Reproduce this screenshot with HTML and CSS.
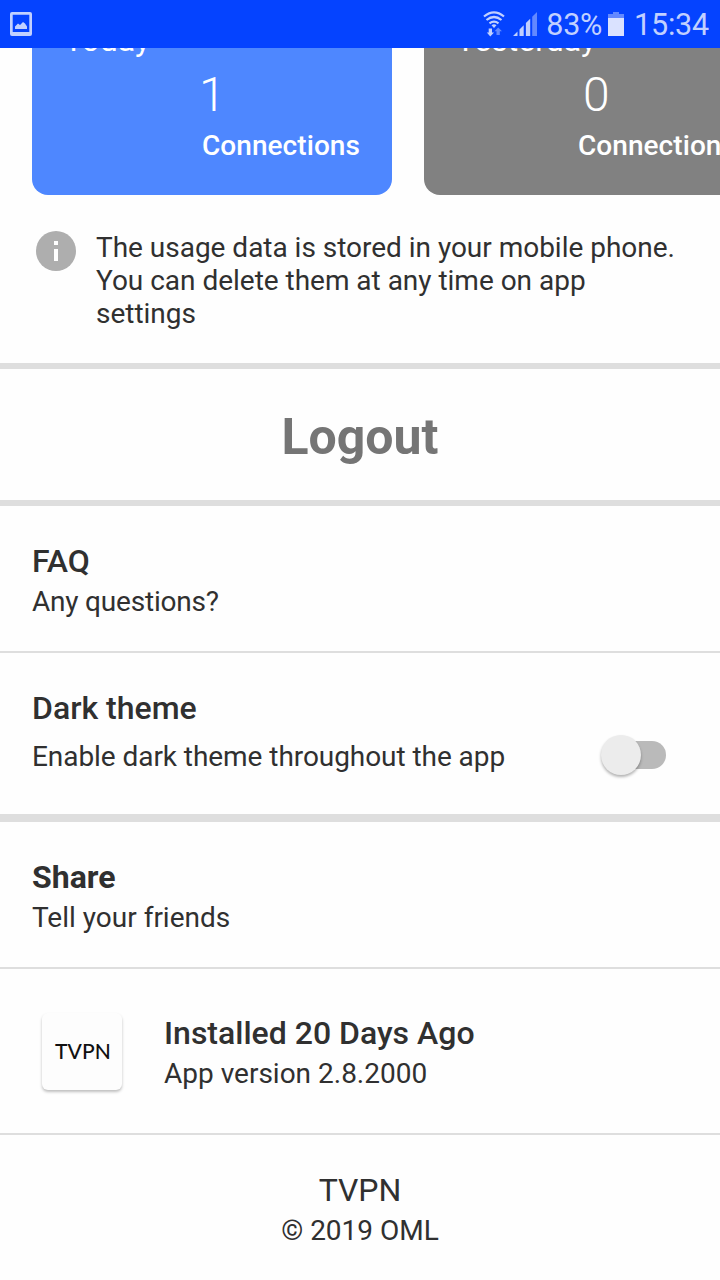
FILE: index.html
```
<!DOCTYPE html>
<html lang="en">
<head>
    <meta charset="UTF-8">
    <meta name="viewport" content="width=device-width, initial-scale=1.0">
    <title>TVPN</title>
    <link rel="stylesheet" href="styles.css">
</head>
<body>
    <header class="status-bar">
        <svg class="icon-picture" width="22" height="24" viewBox="0 0 22 24">
            <path fill-rule="evenodd" d="M2 0h18a2 2 0 0 1 2 2v20a2 2 0 0 1-2 2H2a2 2 0 0 1-2-2V2a2 2 0 0 1 2-2zM2.700 2.700v17.300h16.600V2.700z"/>
            <path d="M5 17v-2.500l3-3 2 1.500 3-3 2 1.500 2 3V17z"/>
        </svg>
        <div class="status-right">
            <svg class="icon-wifi" width="22" height="26" viewBox="0 0 22 26">
                <path class="wave" d="M1 5.500Q11-2.800 21 5.500M3.500 9Q11 3 18.500 9M6.500 12.300Q11 8.800 15.500 12.300"/>
                <path d="M8.500 14.300q2.500-2 5 0L11 17z"/>
                <path d="M5.700 17.500h3.300v4h2L7.300 25.400l-3.500-3.900h1.900z"/>
                <path class="dim" d="M13.500 24h3.300v-3.700h2.200L15.200 16.400l-3.700 3.900h2z"/>
            </svg>
            <svg class="icon-signal" width="24" height="24" viewBox="0 0 24 24">
                <path d="M0 24l4.500-4.500V24zM6.500 17.500L10.700 13.300V24H6.500zM12.900 11.100L17.200 6.800V24h-4.300z"/>
                <path class="dim" d="M19.200 4.800L24 0v24h-4.800z"/>
            </svg>
            <span class="battery-text">83%</span>
            <svg class="icon-battery" width="16" height="24" viewBox="0 0 16 24">
                <path class="dim" d="M5 0h6v2h5v4H0V2h5z"/>
                <path d="M0 6h16v18H0z"/>
            </svg>
            <span class="clock">15:34</span>
        </div>
    </header>

    <main>
        <section class="cards">
            <div class="card card-today">
                <p class="day">Today</p>
                <div class="count">
                    <p class="number">1</p>
                    <p class="label">Connections</p>
                </div>
            </div>
            <div class="card card-yesterday">
                <p class="day">Yesterday</p>
                <div class="count">
                    <p class="number">0</p>
                    <p class="label">Connections</p>
                </div>
            </div>
        </section>

        <section class="info">
            <svg class="icon-info" width="40" height="40" viewBox="0 0 40 40">
                <circle cx="20" cy="20" r="20"/>
                <path d="M18 10h4v4h-4zM18 18h4v12h-4z"/>
            </svg>
            <p>The usage data is stored in your mobile phone. You can delete them at any time on app settings</p>
        </section>

        <section class="logout">
            <button class="btn-logout">Logout</button>
        </section>

        <section class="row row-faq">
            <h2>FAQ</h2>
            <p>Any questions?</p>
        </section>

        <section class="row row-theme">
            <h2>Dark theme</h2>
            <div class="theme-line">
                <p>Enable dark theme throughout the app</p>
                <div class="switch"><div class="thumb"></div></div>
            </div>
        </section>

        <section class="row row-share">
            <h2>Share</h2>
            <p>Tell your friends</p>
        </section>

        <section class="row row-app">
            <div class="app-icon"><span>TVPN</span></div>
            <div>
                <h2>Installed 20 Days Ago</h2>
                <p>App version 2.8.2000</p>
            </div>
        </section>
    </main>

    <footer>
        <h3>TVPN</h3>
        <p>© 2019 OML</p>
    </footer>
</body>
</html>
```
FILE: styles.css
```
* {
    box-sizing: border-box;
    margin: 0;
    padding: 0;
}
body {
    width: 720px;
    height: 1280px;
    overflow: hidden;
    font-family: Roboto, sans-serif;
    font-size: 28px;
    line-height: 33px;
    color: #303030;
    background-color: #fefefe;
}
svg {
    display: block;
    flex-shrink: 0;
}

/* Status bar */
.status-bar {
    display: flex;
    justify-content: space-between;
    align-items: center;
    height: 48px;
    padding: 0 11px 0 10px;
    background-color: #0543ff;
    color: #c1d0ff;
    fill: #c1d0ff;
}
.status-right {
    display: flex;
    align-items: center;
    font-size: 30.5px;
}
.battery-text {
    letter-spacing: -0.3px;
}
.clock {
    letter-spacing: -0.2px;
}
.wave {
    fill: none;
    stroke: #c1d0ff;
    stroke-width: 2.2;
}
.dim {
    fill: #6389ff;
}
.icon-wifi {
    margin-top: -1px;
}
.icon-signal {
    margin: 0 9px 0 8px;
}
.icon-battery {
    margin: 0 10px 0 6px;
    fill: #dae2ff;
}

/* Usage cards */
.cards {
    display: flex;
    gap: 32px;
    height: 147px;
    padding-left: 32px;
    overflow: hidden;
}
.card {
    display: flex;
    flex-direction: column;
    justify-content: flex-end;
    flex: 0 0 360px;
    padding: 0 32px 33px 36px;
    border-radius: 0 0 16px 16px;
    color: #fff;
    font-weight: 500;
}
.card-today {
    background-color: #4e87ff;
}
.card-yesterday {
    background-color: #818181;
    padding-right: 48px;
}
.day {
    margin-left: -4px;
    font-size: 32px;
    font-weight: 400;
    line-height: 38px;
}
.count {
    align-self: flex-end;
    margin-top: 8px;
}
.label {
    letter-spacing: 0.07px;
}
.number {
    margin: 0 0 6px -3px;
    font-size: 48px;
    font-weight: 300;
    line-height: 56px;
}
.card-yesterday .number {
    margin-left: 5px;
}

/* Info note */
.info {
    display: flex;
    gap: 20px;
    height: 174px;
    padding: 36px 36px 0;
    border-bottom: 6px solid #dedede;
    letter-spacing: -0.02px;
}
.icon-info circle {
    fill: #aeaeae;
}
.icon-info path {
    fill: #fff;
}

.logout {
    display: flex;
    justify-content: center;
    align-items: center;
    height: 137px;
    padding-top: 4px;
    border-bottom: 6px solid #dedede;
}
.btn-logout {
    border: none;
    background: none;
    color: #757575;
    font-family: inherit;
    font-size: 50px;
    font-weight: 700;
    cursor: pointer;
}

/* Settings rows */
.row {
    height: 147px;
    padding: 36px 32px 0;
    border-bottom: 2px solid #dedede;
}
.row h2 {
    margin-bottom: 5px;
    font-size: 32px;
    font-weight: 500;
    line-height: 38px;
}
.row-faq p {
    letter-spacing: -0.2px;
}
.row-theme {
    height: 169px;
    border-bottom-width: 8px;
}
.theme-line {
    display: flex;
    justify-content: space-between;
    align-items: center;
    padding: 8px 22px 0 0;
    letter-spacing: -0.06px;
}
.switch {
    display: flex;
    align-items: center;
    width: 60px;
    height: 28px;
    margin-top: -4px;
    border-radius: 14px;
    background-color: #bababa;
}
.thumb {
    flex-shrink: 0;
    width: 40px;
    height: 40px;
    margin-left: -5px;
    border-radius: 50%;
    background-color: #ececec;
    box-shadow: 0 2px 3px rgba(0, 0, 0, 0.3);
}
.row-share h2 {
    font-weight: 700;
}
.row-app {
    display: flex;
    gap: 42px;
    height: 166px;
    padding: 45px 42px 0;
}
.app-icon {
    display: flex;
    justify-content: center;
    align-items: center;
    width: 80px;
    height: 77px;
    margin-top: -1px;
    padding: 0 0 2px 2px;
    border-radius: 6px;
    background-color: #fdfdfd;
    box-shadow: 0 2px 3px rgba(0, 0, 0, 0.25);
    color: #111;
    font-family: Lato, sans-serif;
    font-size: 21px;
    font-weight: 500;
    letter-spacing: 0.1px;
}

footer {
    padding-top: 36px;
    text-align: center;
}
footer h3 {
    margin-bottom: 5px;
    font-size: 32px;
    font-weight: 400;
    line-height: 38px;
}
```
